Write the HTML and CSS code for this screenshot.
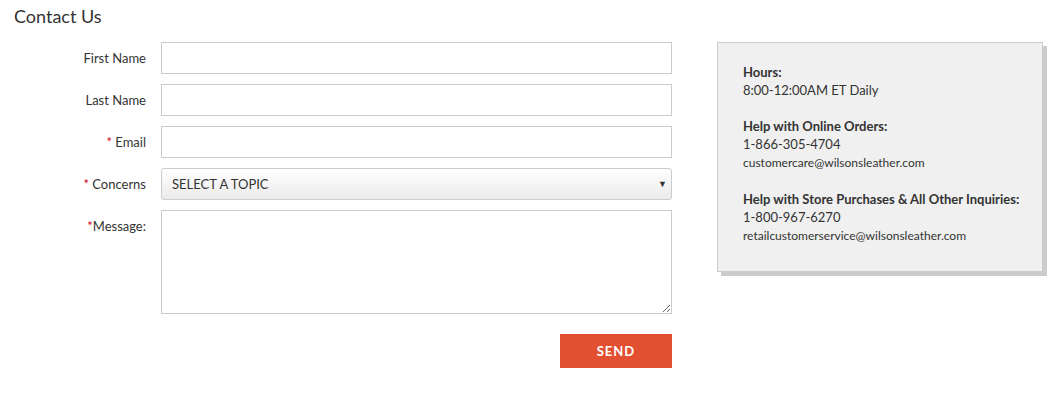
FILE: index.html
```html
<!DOCTYPE html>
<html lang="en">
<head>
  <meta charset="UTF-8" />
  <title>Contact Us</title>
  <link rel="stylesheet" href="styles.css">
</head>
<body>
  <h1>Contact Us</h1>

  <div class="contact">
    <form class="contact-form">
      <div class="row">
        <label for="firstName">First Name</label>
        <input type="text" id="firstName" />
      </div>
      <div class="row">
        <label for="lastName">Last Name</label>
        <input type="text" id="lastName" />
      </div>
      <div class="row">
        <label for="email"><span class="req">*</span> Email</label>
        <input type="email" id="email" />
      </div>
      <div class="row">
        <label for="concerns"><span class="req">*</span> Concerns</label>
        <div class="select">
          <select id="concerns">
            <option>SELECT A TOPIC</option>
            <option>Order Status</option>
            <option>Returns</option>
            <option>Other</option>
          </select>
          <span class="arrow">&#9660;</span>
        </div>
      </div>
      <div class="row">
        <label for="message"><span class="req">*</span>Message:</label>
        <textarea id="message"></textarea>
      </div>
      <div class="actions">
        <button type="button">SEND</button>
      </div>
    </form>

    <aside class="info">
      <p>
        <strong>Hours:</strong><br>
        8:00-12:00AM ET Daily
      </p>
      <p>
        <strong>Help with Online Orders:</strong><br>
        <span class="phone">1-866-305-4704</span><br>
        <span class="mail">customercare@wilsonsleather.com</span>
      </p>
      <p>
        <strong>Help with Store Purchases &amp; All Other Inquiries:</strong><br>
        <span class="phone">1-800-967-6270</span><br>
        <span class="mail">retailcustomerservice@wilsonsleather.com</span>
      </p>
    </aside>
  </div>
</body>
</html>
```

FILE: styles.css
```css
html, body {
  margin: 0;
  padding: 0;
  font-family: Lato, "Open Sans", Arial, sans-serif;
  color: #333;
  background: #fff;
}
body {
  padding: 5px 0 0 14px;
}
h1 {
  margin: 0 0 15px;
  font-size: 18px;
  font-weight: normal;
  line-height: 22px;
}
.contact {
  display: flex;
  align-items: flex-start;
  gap: 45px;
}
.contact-form {
  flex: none;
  width: 658px;
}
.row {
  display: flex;
  align-items: flex-start;
  gap: 15px;
  margin-bottom: 10px;
}
.row label {
  width: 132px;
  flex: none;
  text-align: right;
  font-size: 13px;
  line-height: 32px;
}
.row label .req { color: #d0021b; }
.row input,
.row textarea,
.select {
  flex: 1;
  box-sizing: border-box;
  border: 1px solid #ccc;
  border-radius: 0;
  font-family: inherit;
  font-size: 13px;
  margin: 0;
}
.row input {
  height: 32px;
  padding: 0 10px;
}
.row textarea {
  height: 104px;
  padding: 6px 10px;
  resize: vertical;
}
.select {
  position: relative;
  height: 32px;
  border-radius: 3px;
  background: linear-gradient(#fff, #ebebeb);
}
.select select {
  appearance: none;
  -webkit-appearance: none;
  width: 100%;
  height: 30px;
  border: none;
  background: transparent;
  padding: 0 10px;
  font-family: inherit;
  font-size: 13px;
  color: #333;
}
.select .arrow {
  position: absolute;
  right: 4px;
  top: 9px;
  font-size: 9px;
  color: #333;
  pointer-events: none;
}
.actions {
  display: flex;
  justify-content: flex-end;
  padding-top: 10px;
}
.actions button {
  width: 112px;
  height: 34px;
  border: none;
  background: #e35031;
  color: #fff;
  font-family: inherit;
  font-size: 13px;
  font-weight: bold;
  letter-spacing: 1px;
  cursor: pointer;
}
.actions button:hover { background: #c9411f; }
.info {
  flex: none;
  width: 326px;
  box-sizing: border-box;
  padding: 20px 10px 26px 25px;
  background: #f0f0f0;
  border: 1px solid #ccc;
  box-shadow: 4px 4px 0 #ccc;
  font-size: 13px;
  line-height: 18px;
}
.info p {
  margin: 0 0 18px;
  white-space: nowrap;
}
.info p:last-child { margin-bottom: 0; }
.info strong { font-weight: bold; }
.info .phone { font-size: 13px; }
.info .mail { font-size: 12px; }
```
